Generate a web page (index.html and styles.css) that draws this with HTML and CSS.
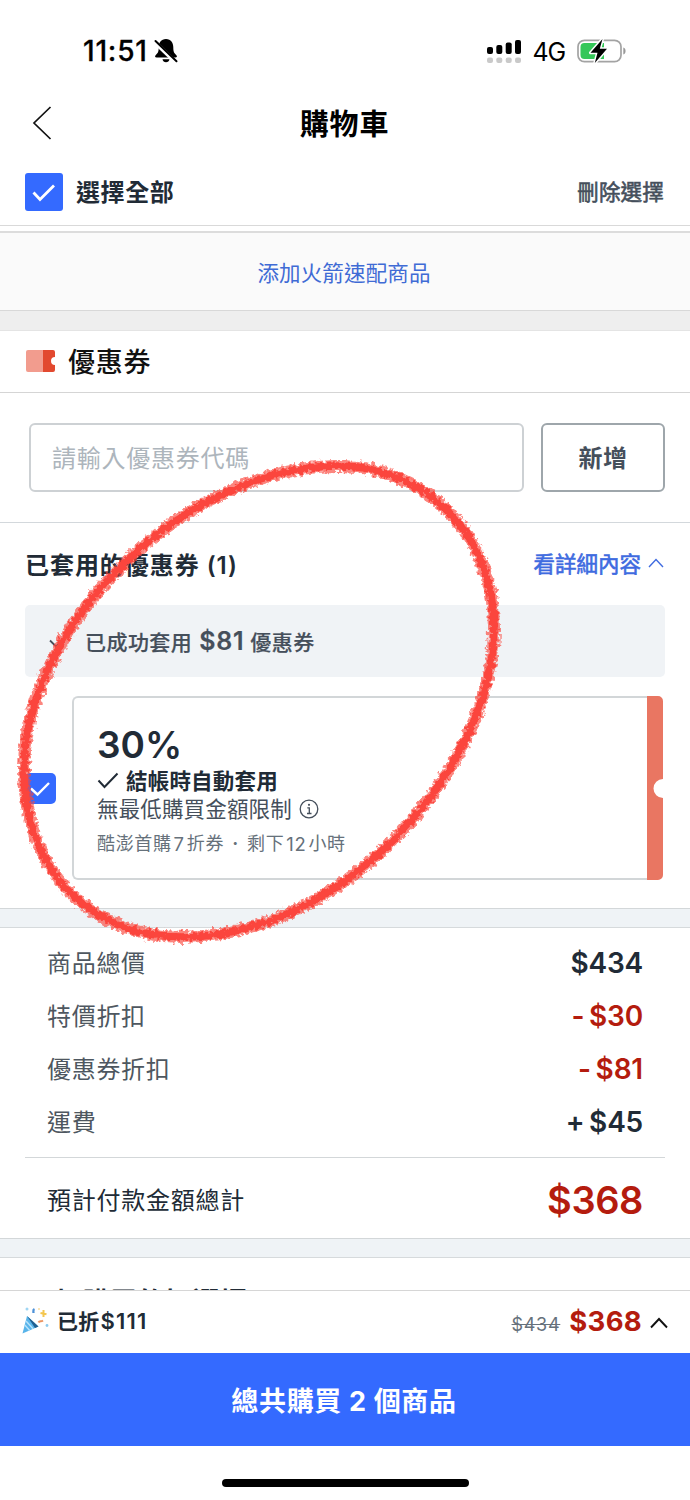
FILE: index.html
```html
<!DOCTYPE html>
<html lang="zh-Hant">
<head>
<meta charset="utf-8">
<title>購物車</title>
<link rel="stylesheet" href="styles.css">
</head>
<body>
<div class="screen">
  <header class="status">
    <div class="status-left">
      <span class="clock">11:51</span>
      <svg class="bell" width="24" height="26" viewBox="0 0 24 26">
        <path d="M12 1c-5 0-7.300 4-7.300 8.500 0 4.500-.9 5.500-2.900 7.500-1.300 1.300-.8 2.500.8 2.500h18.800c1.600 0 2.100-1.200.8-2.500-2-2-2.900-3-2.900-7.500C19.300 5 17 1 12 1zM8.500 21.200h7c-.3 1.900-1.700 3-3.500 3s-3.200-1.100-3.500-3z"/>
        <path d="M.8 4.200 22 24.500" stroke="#fff" stroke-width="4"/>
        <path d="M1.500 3 22.500 23.200" stroke="#000" stroke-width="2" stroke-linecap="round"/>
      </svg>
    </div>
    <div class="status-right">
      <svg width="36" height="25" viewBox="0 0 36 25">
        <g fill="#000"><rect x="1" y="8" width="6" height="7" rx="2"/><rect x="10.300" y="6" width="6" height="9" rx="2"/><rect x="19.700" y="3.500" width="6" height="11.500" rx="2"/><rect x="29" y="1" width="6" height="14" rx="2"/></g>
        <g fill="#c9c9c9"><rect x="1" y="18.500" width="6" height="5.500" rx="2"/><rect x="10.300" y="18.500" width="6" height="5.500" rx="2"/><rect x="19.700" y="18.500" width="6" height="5.500" rx="2"/><rect x="29" y="18.500" width="6" height="5.500" rx="2"/></g>
      </svg>
      <span class="network">4G</span>
      <svg class="battery" width="50" height="26" viewBox="0 0 50 26">
        <rect x="1" y="2.300" width="43" height="21.400" rx="6.500" fill="none" stroke="#a3a3a3" stroke-width="1.700"/>
        <path d="M46.300 9.500c3 .8 3 6.200 0 7z" fill="#999"/>
        <path d="M7.500 5H27v16H7.500A4 4 0 0 1 3.500 17V9a4 4 0 0 1 4-4z" fill="#35c759"/>
        <path d="M25.500 1 13.500 14.800h7L17.800 25l12.200-14.300h-7.200z" fill="#000" stroke="#fff" stroke-width="3" paint-order="stroke" stroke-linejoin="round"/>
      </svg>
    </div>
  </header>

  <nav class="nav">
    <svg class="back" width="20" height="34" viewBox="0 0 20 34"><path d="M18.500 1 2 17l16.500 16" fill="none" stroke="#111" stroke-width="1.700"/></svg>
    <h1 class="title">購物車</h1>
  </nav>

  <div class="select-row">
    <span class="checkbox"><svg width="38" height="38" viewBox="0 0 38 38"><path d="M8.500 19.500 15 26.500 29 12.500" fill="none" stroke="#fff" stroke-width="2.800"/></svg></span>
    <span class="select-all">選擇全部</span>
    <span class="delete">刪除選擇</span>
  </div>

  <div class="add-more">添加火箭速配商品</div>
  <div class="gap gap-top"></div>

  <section class="coupon-head">
    <svg width="30" height="22" viewBox="0 0 30 22">
      <path d="M2 0h16v22H2a2 2 0 0 1-2-2V2a2 2 0 0 1 2-2z" fill="#f29c8e"/>
      <path d="M17 0h10a2 2 0 0 1 2 2v5a4 4 0 0 0 0 8v5a2 2 0 0 1-2 2H17z" fill="#e2492f"/>
    </svg>
    <h2>優惠券</h2>
  </section>

  <section class="code-row">
    <div class="code-input">請輸入優惠券代碼</div>
    <div class="code-button">新增</div>
  </section>

  <section class="applied">
    <div class="applied-head">
      <h3>已套用的優惠券 (1)</h3>
      <span class="details">看詳細內容<svg width="16" height="10" viewBox="0 0 16 10"><path d="M1 9 8 1.500 15 9" fill="none" stroke="#3f6be0" stroke-width="1.400"/></svg></span>
    </div>
    <div class="notice">
      <svg width="20" height="14" viewBox="0 0 20 14"><path d="M1 6.500 7 12.500 18.500 1" fill="none" stroke="#454f5b" stroke-width="1.800"/></svg>
      <span class="notice-text">已成功套用 <b>$81</b> 優惠券</span>
    </div>
    <div class="coupon-line">
      <span class="checkbox small"><svg width="31" height="31" viewBox="0 0 31 31"><path d="M6 15.500 12.500 21.500 24 10" fill="none" stroke="#fff" stroke-width="2.400"/></svg></span>
      <div class="coupon">
        <div class="coupon-body">
          <div class="percent">30%</div>
          <div class="auto"><svg width="22" height="17" viewBox="0 0 22 17"><path d="M1.500 8.500 7.500 15 20.500 1.500" fill="none" stroke="#212b36" stroke-width="2"/></svg><span>結帳時自動套用</span></div>
          <div class="limit"><span>無最低購買金額限制</span><svg width="20" height="20" viewBox="0 0 20 20"><circle cx="10" cy="10" r="8.800" fill="none" stroke="#454f5b" stroke-width="1.300"/><path d="M8.300 8.800h2V14.500M8 14.500h4.500" fill="none" stroke="#454f5b" stroke-width="1.300"/><circle cx="10" cy="5.800" r="1.100" fill="#454f5b"/></svg></div>
          <div class="expiry"><span>酷澎首購</span><span class="num">7</span><span>折券</span><span class="dot">·</span><span>剩下</span><span class="num">12</span><span>小時</span></div>
        </div>
        <svg class="stub" width="16" height="184" viewBox="0 0 16 184"><path d="M0 0h11a5 5 0 0 1 5 5v78a9.500 9.500 0 0 0 0 19v77a5 5 0 0 1-5 5H0z" fill="#e97662"/></svg>
      </div>
    </div>
  </section>

  <div class="gap"></div>

  <section class="summary">
    <div class="row"><span>商品總價</span><b>$434</b></div>
    <div class="row red"><span>特價折扣</span><b>- $30</b></div>
    <div class="row red"><span>優惠券折扣</span><b>- $81</b></div>
    <div class="row"><span>運費</span><b>+ $45</b></div>
    <div class="total"><span>預計付款金額總計</span><b>$368</b></div>
  </section>

  <div class="gap"></div>
  <div class="next"><div class="next-title">加購買的好選擇</div></div>

  <footer class="bar">
    <svg width="28" height="30" viewBox="0 0 28 30">
      <path d="M6 10 17.500 20.500 1.500 27.500z" fill="#58b4ea"/>
      <path d="M6 10 17.500 20.500 14 22z" fill="#205f90"/>
      <path d="M5 15 12 22.800M3.800 19 8.500 24.300" stroke="#b5e2fb" stroke-width="1.500"/>
      <path d="M13.500 3c-2 1-1 2.500-1 4" fill="none" stroke="#4d91d8" stroke-width="2.300"/>
      <path d="M22.500 4v7M19.500 7l6 1.200" stroke="#f4c64f" stroke-width="2"/>
      <path d="M17.500 16.500c1-2 2.500-.5 4.500-2" fill="none" stroke="#ec9461" stroke-width="2"/>
      <circle cx="6" cy="3" r="1.500" fill="#9fd6f4"/><circle cx="26" cy="19.500" r="1.400" fill="#8dcbef"/><circle cx="18" cy="3" r="1" fill="#f7dda0"/>
    </svg>
    <span class="saved">已折<span class="saved-sum">$111</span></span>
    <span class="old">$434</span>
    <b class="now">$368</b>
    <svg class="up" width="18" height="12" viewBox="0 0 18 12"><path d="M1 10.500 9 2l8 8.500" fill="none" stroke="#111" stroke-width="1.900"/></svg>
  </footer>
  <div class="buy"><span>總共購買 2 個商品</span></div>
  <div class="home"><i></i></div>

  <svg class="scribble" width="690" height="1500" viewBox="0 0 690 1500">
    <defs>
      <filter id="crayon" x="-5%" y="-5%" width="110%" height="110%">
        <feTurbulence type="fractalNoise" baseFrequency="0.25" numOctaves="3" seed="4" result="noise"/>
        <feDisplacementMap in="SourceGraphic" in2="noise" scale="8" xChannelSelector="R" yChannelSelector="G" result="rough"/>
        <feGaussianBlur in="rough" stdDeviation="0.6"/>
      </filter>
    </defs>
    <g filter="url(#crayon)" fill="none" stroke="#fb453c">
      <path d="M340 466C420 466 494 530 494 628C494 765 345 937 183 937C90 937 24 870 24 770C24 630 180 466 340 466Z" stroke-width="12" opacity=".65"/>
      <path d="M340 466C420 466 494 530 494 628C494 765 345 937 183 937C90 937 24 870 24 770C24 630 180 466 340 466Z" stroke-width="7.500"/>
    </g>
  </svg>
</div>
</body>
</html>
```
FILE: styles.css
```css
* { box-sizing: border-box; }
body {
  margin: 0;
  background: #fff;
  color: #212b36;
  font-family: Inter, "Noto Sans CJK TC", sans-serif;
}
h1, h2, h3 { margin: 0; }
svg { display: block; flex: none; }
.screen {
  position: relative;
  display: flex;
  flex-direction: column;
  width: 690px;
  height: 1500px;
  overflow: hidden;
  white-space: nowrap;
}
.screen > * { flex: none; }

.status {
  display: flex;
  justify-content: space-between;
  height: 84px;
  padding: 18px 63px 0 83px;
  color: #000;
}
.status-left, .status-right { display: flex; align-items: center; }
.clock { font-size: 28px; font-weight: 500; letter-spacing: .8px; -webkit-text-stroke: .3px #000; }
.bell { margin-left: 6px; }
.network { margin: 2px 0 0 11px; font-size: 25px; letter-spacing: -1.200px; }
.battery { margin-left: 12px; }

.nav {
  display: flex;
  align-items: center;
  height: 79px;
  padding: 0 32px 2px;
}
.title {
  flex: 1;
  margin: 5px 21px 0 0;
  text-align: center;
  font-size: 29px;
  line-height: 40px;
  letter-spacing: .9px;
  font-weight: 700;
  color: #000;
}

.select-row {
  display: flex;
  align-items: center;
  height: 63px;
  padding: 0 26px 4px 25px;
  border-bottom: 1px solid #d9d9d9;
}
.checkbox {
  width: 38px;
  height: 38px;
  border-radius: 3px;
  background: #346aff;
}
.select-all { margin: -3px 0 0 13px; font-size: 24px; letter-spacing: .6px; font-weight: 700; }
.delete { margin: -3px 0 0 auto; font-size: 21.500px; letter-spacing: .2px; color: #454f5b; -webkit-text-stroke: .6px #454f5b; }

.add-more {
  height: 80px;
  margin-top: 5px;
  border-top: 2px solid #dcdcdc;
  border-bottom: 1px solid #d8d8d8;
  background: #fafafa;
  text-align: center;
  font-size: 21.500px;
  line-height: 80px;
  padding-right: 2px;
  letter-spacing: .15px;
  color: #3f6bd5;
}
.gap {
  height: 20px;
  border-top: 1px solid #d3d7d9;
  border-bottom: 1px solid #d6dadc;
  background: #eff3f6;
}
.gap-top { border-top: 0; border-bottom: 1px solid #e4e4e4; background: #eee; }

.coupon-head {
  display: flex;
  align-items: center;
  height: 62px;
  padding: 0 26px 2px;
  border-bottom: 1px solid #d5d5d5;
}
.coupon-head h2 { margin-left: 12px; font-size: 27px; letter-spacing: .7px; font-weight: 500; color: #111; }

.code-row {
  display: flex;
  gap: 17px;
  height: 130px;
  padding: 30px 25px 0 29px;
  border-bottom: 1px solid #d3d8dc;
}
.code-input, .code-button {
  height: 69px;
  border: 2px solid #cdd1d4;
  border-radius: 6px;
  line-height: 67px;
}
.code-input { width: 495px; padding-left: 21px; font-size: 24px; letter-spacing: .75px; color: #adb5bc; }
.code-button { width: 124px; border-color: #9ea6ab; text-align: center; font-size: 24px; letter-spacing: .6px; font-weight: 700; color: #454f5b; }

.applied { height: 385px; padding: 20px 25px 0; }
.applied-head { display: flex; justify-content: space-between; align-items: center; height: 40px; }
.applied-head h3 { font-size: 24px; letter-spacing: .95px; font-weight: 600; }
.details { display: flex; align-items: center; gap: 7px; font-size: 21.500px; color: #3f6be0; -webkit-text-stroke: .6px #3f6be0; margin: -1px 1px 0 0; }
.notice {
  display: flex;
  align-items: center;
  height: 72px;
  margin-top: 22px;
  padding-left: 24px;
  border-radius: 5px;
  background: #f0f3f6;
  font-size: 21px;
  letter-spacing: .45px;
  font-weight: 500;
  color: #454f5b;
}
.notice-text { margin-left: 16px; -webkit-text-stroke: .2px #454f5b; }
.notice b { margin-left: 1px; font-size: 25px; font-weight: 600; letter-spacing: .7px; }
.coupon-line { display: flex; align-items: center; height: 184px; margin-top: 19px; }
.small { width: 31px; height: 31px; border-radius: 5px; }
.coupon { display: flex; width: 591px; height: 184px; margin-left: 16px; }
.coupon-body {
  flex: 1;
  padding: 24px 0 0 23px;
  border: 2px solid #d2d6d8;
  border-right: 0;
  border-radius: 6px 0 0 6px;
}
.percent { height: 44px; font-size: 37px; line-height: 46px; letter-spacing: 0; font-weight: 600; }
.auto { display: flex; align-items: center; gap: 7px; height: 29px; font-size: 21.500px; letter-spacing: .2px; font-weight: 700; }
.limit { display: flex; align-items: center; gap: 7px; height: 28px; font-size: 21.500px; letter-spacing: .15px; color: #454f5b; }
.auto span, .limit span { margin-top: -3px; }
.expiry { display: flex; height: 38px; font-size: 18px; line-height: 42px; letter-spacing: .65px; color: #66717b; }
.num { margin: 0 2px; font-size: 18.500px; }
.dot { width: 23px; text-align: center; font-weight: 700; }

.summary { height: 310px; padding: 7px 25px 0; }
.row { display: flex; align-items: center; justify-content: space-between; height: 53px; padding: 0 22px; font-size: 24px; letter-spacing: .7px; color: #4e5760; }
.row b { margin-top: 2px; font-size: 28px; font-weight: 600; word-spacing: -2px; letter-spacing: -.2px; color: #212b36; }
.row.red b, .total b, .now { color: #b41c0e; }
.total { display: flex; align-items: center; justify-content: space-between; height: 83px; margin-top: 10px; padding: 0 22px; border-top: 1px solid #d3d7d9; font-size: 24px; letter-spacing: .75px; color: #212b36; }
.total span { margin-top: -2px; }
.total b { margin-top: 1px; font-size: 38px; font-weight: 600; letter-spacing: -.4px; }

.next { height: 32px; overflow: hidden; padding: 27px 0 0 55px; }
.next-title { font-size: 27px; line-height: 36px; letter-spacing: .5px; font-weight: 700; }

.bar { display: flex; align-items: center; height: 63px; padding: 0 21px 2px; border-top: 1px solid #d6d6d6; background: #fff; }
.saved { margin: -2px 0 0 8px; font-size: 21px; letter-spacing: .2px; font-weight: 600; }
.saved-sum { margin-left: 1px; font-size: 22px; letter-spacing: 1.200px; }
.old { margin: 6px 9px 0 auto; font-size: 18px; letter-spacing: .7px; color: #66717b; text-decoration: line-through; }
.now { font-size: 27.500px; font-weight: 700; letter-spacing: .3px; }
.up { margin: 4px 1px 0 8px; }

.buy { display: flex; align-items: center; justify-content: center; height: 93px; padding: 0 2px 1px 0; background: #346aff; color: #fff; font-size: 27px; letter-spacing: .65px; font-weight: 700; }
.home { display: flex; justify-content: center; padding-top: 33px; }
.home i { width: 247px; height: 8px; border-radius: 4px; background: #000; }

.scribble { position: absolute; left: 0; top: 0; pointer-events: none; }
```
